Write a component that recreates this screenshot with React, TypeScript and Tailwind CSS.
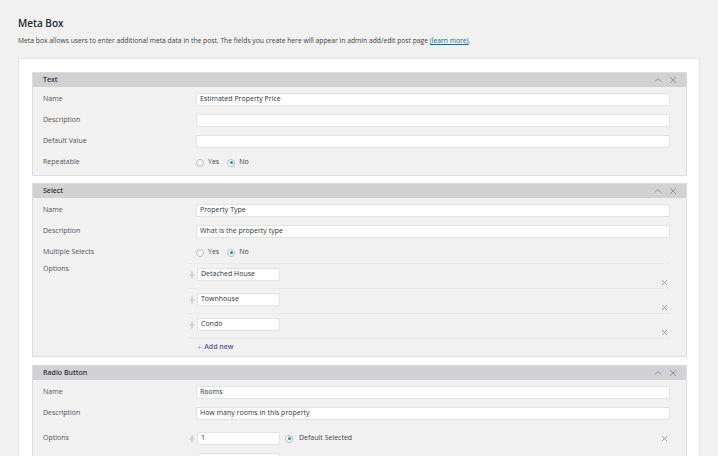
import React from 'react';

// Kleine Icons für Panel-Header und Optionszeilen
const ChevronUp = () => (
  <svg width="8" height="6" viewBox="0 0 8 6" fill="none" stroke="#8c8f94" strokeWidth="0.9">
    <path d="M1 4.5L4 1.5L7 4.5" />
  </svg>
);

const Cross = ({ size = 7 }: { size?: number }) => (
  <svg width={size} height={size} viewBox="0 0 8 8" fill="none" stroke="#8c8f94" strokeWidth="0.9">
    <path d="M1 1L7 7M7 1L1 7" />
  </svg>
);

const DragHandle = () => (
  <svg width="6" height="8" viewBox="0 0 6 8" fill="none" stroke="#a7aaad" strokeWidth="0.8">
    <path d="M0.5 4H5.5M3 0.5V3M3 5V7.5" />
  </svg>
);

const Radio = ({ checked }: { checked?: boolean }) => (
  <span className="flex h-[8px] w-[8px] items-center justify-center rounded-full border border-[#b4b9be] bg-white">
    {checked && <span className="h-[3px] w-[3px] rounded-full bg-[#1e8cbe]" />}
  </span>
);

const Input = ({ value = '', className = '' }: { value?: string; className?: string }) => (
  <div
    className={`flex h-[13px] items-center border border-[#e4e4e4] bg-white pl-[3px] text-[7px] text-[#32373c] ${className}`}
  >
    {value}
  </div>
);

const YesNo = () => (
  <div className="flex items-center gap-[4px] text-[7px] text-[#444]">
    <Radio />
    <span>Yes</span>
    <span className="ml-[4px]">
      <Radio checked />
    </span>
    <span>No</span>
  </div>
);

const Row = ({ label, children }: { label: string; children: React.ReactNode }) => (
  <div className="flex items-center">
    <div className="w-[153px] text-[7px] text-[#555]">{label}</div>
    <div className="flex-1">{children}</div>
  </div>
);

const Panel = ({ title, className = '', children }: { title: string; className?: string; children: React.ReactNode }) => (
  <div className={`border border-[#dcdcdc] ${className}`}>
    <div className="flex h-[14px] items-center justify-between bg-[#d2d2d4] pl-[10px] pr-[9px]">
      <span className="text-[7px] font-semibold text-[#333]">{title}</span>
      <div className="flex items-center gap-[7px]">
        <ChevronUp />
        <Cross size={8} />
      </div>
    </div>
    <div className="bg-[#f1f1f2] pl-[10px] pr-[16px]">{children}</div>
  </div>
);

const OptionRow = ({ value }: { value: string }) => (
  <div className="flex border-t border-dotted border-[#e2e2e2]">
    <div className="flex items-center gap-[2px] pt-[4px] pb-[7px]">
      <DragHandle />
      <Input value={value} className="w-[83px]" />
    </div>
    <div className="ml-auto mr-[2px] flex pt-[15px]">
      <Cross />
    </div>
  </div>
);

export default function App() {
  return (
    <div
      className="h-[456px] w-[718px] overflow-hidden bg-[#f1f1f1] pl-[18px] pt-[16px]"
      style={{ fontFamily: '"Open Sans", "Liberation Sans", sans-serif' }}
    >
      <h1 className="text-[10px] font-semibold leading-[14px] text-[#23282d]">Meta Box</h1>
      <p className="mt-[6px] text-[6.75px] leading-[10px] text-[#444]">
        Meta box allows users to enter additional meta data in the post. The fields you create here will appear in
        admin add/edit post page <span className="text-[#0073aa] underline">(learn more)</span>.
      </p>

      <div className="mt-[12px] flex w-[682px] flex-col gap-[7px] border border-[#e5e5e5] bg-white pl-[13px] pr-[12px] pt-[13px] pb-[20px]">
        {/* Textfeld */}
        <Panel title="Text">
          <div className="flex flex-col gap-[8px] pt-[6px] pb-[6px]">
            <Row label="Name">
              <Input value="Estimated Property Price" />
            </Row>
            <Row label="Description">
              <Input />
            </Row>
            <Row label="Default Value">
              <Input />
            </Row>
            <Row label="Repeatable">
              <div className="flex h-[13px] items-center">
                <YesNo />
              </div>
            </Row>
          </div>
        </Panel>

        {/* Auswahlfeld */}
        <Panel title="Select">
          <div className="flex flex-col gap-[8px] pt-[6px]">
            <Row label="Name">
              <Input value="Property Type" />
            </Row>
            <Row label="Description">
              <Input value="What is the property type" />
            </Row>
            <Row label="Multiple Selects">
              <div className="flex h-[13px] items-center">
                <YesNo />
              </div>
            </Row>
          </div>
          <div className="mt-[4px] flex">
            <div className="w-[146px] pt-[1px] text-[7px] text-[#555]">Options</div>
            <div className="flex-1">
              <OptionRow value="Detached House" />
              <OptionRow value="Townhouse" />
              <OptionRow value="Condo" />
              <div className="flex h-[18px] items-center gap-[2px] border-t border-dotted border-[#e2e2e2] pl-[8px] text-[7px] font-semibold text-[#6650a4]">
                <span className="text-[9px] font-light leading-none text-[#8a7cb8]">+</span>
                <span>Add new</span>
              </div>
            </div>
          </div>
        </Panel>

        {/* Radio-Buttons */}
        <Panel title="Radio Button" className="mt-[1px]">
          <div className="flex flex-col gap-[8px] pt-[6px] pb-[10px]">
            <Row label="Name">
              <Input value="Rooms" />
            </Row>
            <Row label="Description">
              <Input value="How many rooms in this property" />
            </Row>
            <div className="mt-[4px] flex items-center">
              <div className="w-[146px] text-[7px] text-[#555]">Options</div>
              <div className="flex flex-1 items-center">
                <div className="flex items-center gap-[2px]">
                  <DragHandle />
                  <Input value="1" className="w-[83px]" />
                </div>
                <div className="ml-[5px] flex items-center gap-[6px] text-[7px] text-[#444]">
                  <Radio checked />
                  <span>Default Selected</span>
                </div>
                <div className="ml-auto mr-[2px] flex">
                  <Cross />
                </div>
              </div>
            </div>
            <div className="flex">
              <div className="w-[154px]" />
              <Input className="w-[83px]" />
            </div>
          </div>
        </Panel>
      </div>
    </div>
  );
}
